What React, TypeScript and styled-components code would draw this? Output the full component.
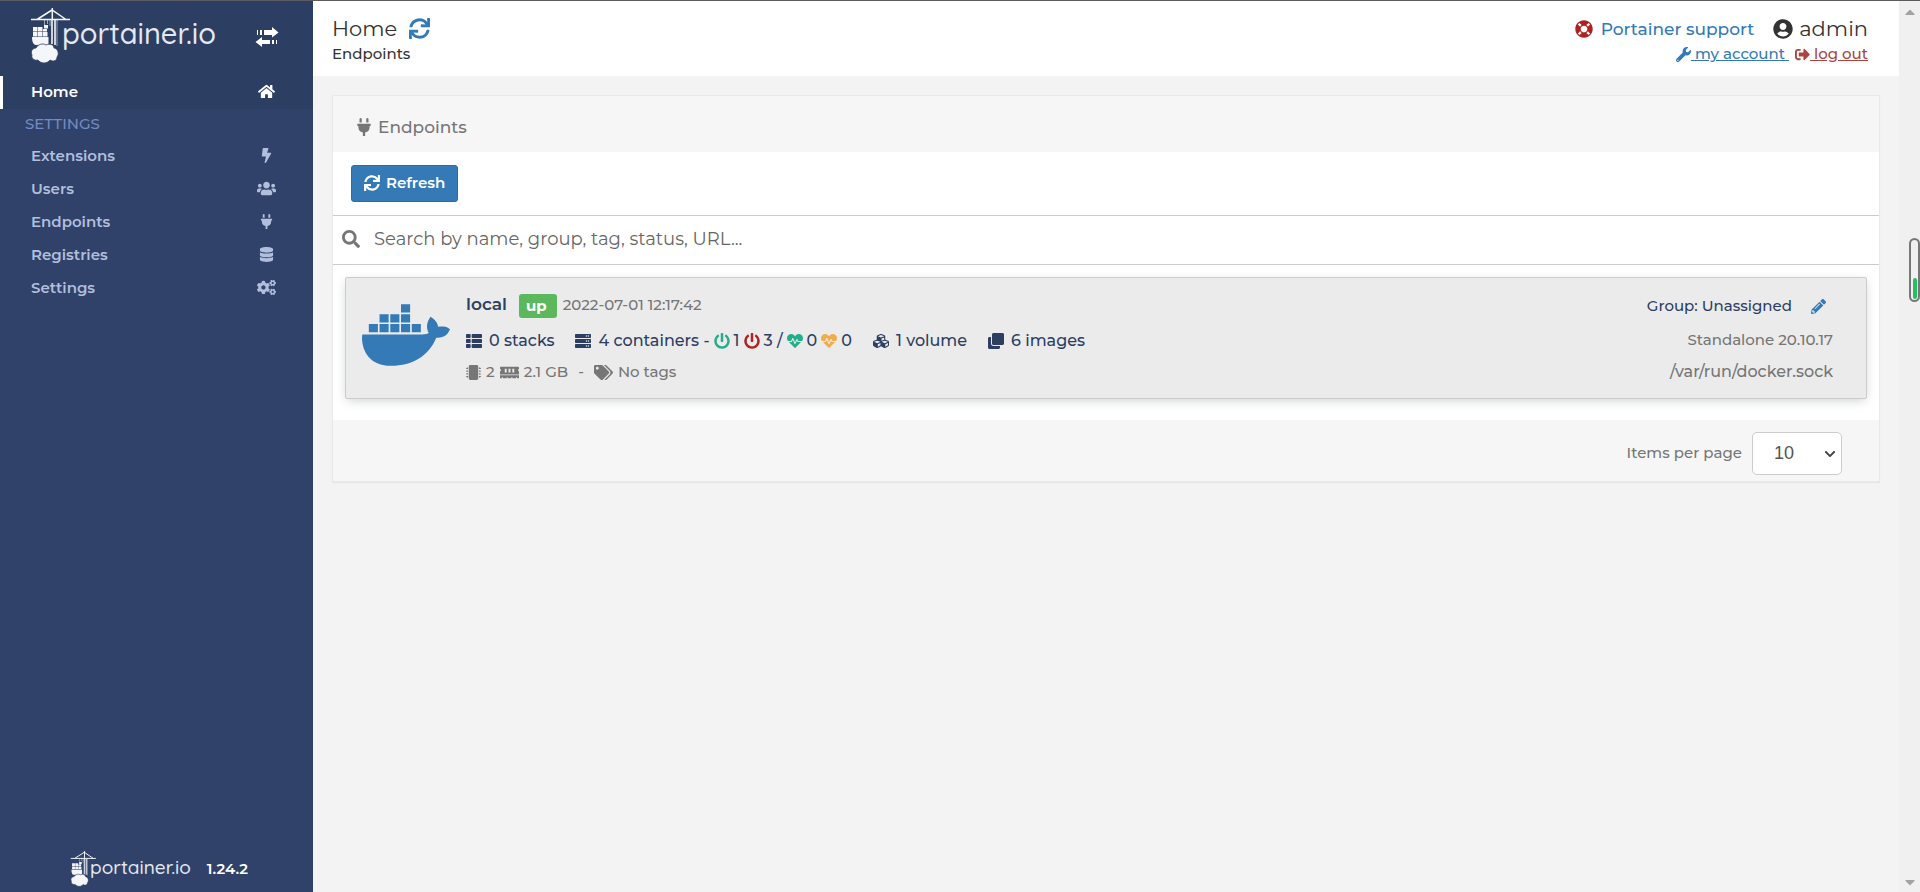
import React from 'react';
import styled, { createGlobalStyle } from 'styled-components';
import {
  FaHome, FaBolt, FaUsers, FaPlug, FaDatabase, FaCogs, FaSync, FaLifeRing, FaUserCircle, FaWrench,
  FaSignOutAlt, FaSearch, FaThList, FaServer, FaPowerOff, FaHeartbeat, FaCubes, FaClone, FaMicrochip,
  FaMemory, FaTags, FaPencilAlt, FaDocker, FaChevronDown, FaCaretUp, FaCaretDown,
} from 'react-icons/fa';

const GlobalStyle = createGlobalStyle`
  *, *::before, *::after { box-sizing: border-box; }
  body {
    margin: 0;
    background: #f3f3f3;
    color: #333;
    font: 500 15px/20px Montserrat, Inter, "Open Sans", sans-serif;
  }
  button, input, select { font: inherit; }
  a { color: #337ab7; }
  svg { flex: none; }
`;

const Page = styled.div`
  display: flex;
  min-height: 100vh;
  border-top: 1px solid #5c5c60;
`;

const Sidebar = styled.nav`
  display: flex;
  flex-direction: column;
  flex: none;
  width: 313px;
  background: #30426a;
`;

const SidebarHead = styled.div`
  display: flex;
  align-items: flex-start;
  justify-content: space-between;
  height: 75px;
  padding: 7px 34px 0 30px;
  background: #2d3e63;
`;

const ToggleButton = styled.button`
  display: flex;
  margin-top: 18px;
  padding: 0;
  border: 0;
  background: none;
  color: #fff;
`;

const MenuLink = styled.a<{ $active?: boolean }>`
  display: flex;
  align-items: center;
  justify-content: space-between;
  height: 33px;
  padding: ${(p) => (p.$active ? '0 36px 2px 28px' : '0 36px 0 31px')};
  border-left: ${(p) => (p.$active ? '3px solid #fff' : '0')};
  background: ${(p) => (p.$active ? '#2d3e63' : 'transparent')};
  color: ${(p) => (p.$active ? '#fff' : '#b2bfdc')};
  font-size: 15px;
  font-weight: 600;
  text-decoration: none;
`;

const MenuIcon = styled.span`
  display: flex;
  justify-content: center;
  width: 22px;
`;

const MenuTitle = styled.div`
  height: 30px;
  padding-left: 25px;
  color: #738bc0;
  font-size: 15px;
  line-height: 30px;
`;

const SidebarFoot = styled.div`
  display: flex;
  align-items: center;
  gap: 16px;
  margin-top: auto;
  padding: 0 0 5px 70px;
  color: #fff;
  font-size: 15px;
  font-weight: 600;
`;

const LogoRow = styled.span`
  display: flex;
  color: #f4f6fa;
`;

const Wordmark = styled.span<{ $small?: boolean }>`
  margin: ${(p) => (p.$small ? '4px 0 0 -6px' : '7px 0 0 -8px')};
  color: #e4e8f0;
  font-family: Quicksand, Lato, sans-serif;
  font-size: ${(p) => (p.$small ? 19 : 29)}px;
  font-weight: 500;
  line-height: ${(p) => (p.$small ? 24 : 36)}px;
`;

const Content = styled.div`
  flex: 1;
  min-width: 0;
`;

const Header = styled.header`
  display: flex;
  justify-content: space-between;
  height: 75px;
  padding: 13px 31px 0 19px;
  background: #fff;
`;

const PageTitle = styled.h1`
  display: flex;
  align-items: center;
  gap: 12px;
  margin: 0;
  font-size: 21px;
  font-weight: 400;
  line-height: 29px;
`;

const IconButton = styled.button`
  display: flex;
  padding: 0;
  border: 0;
  background: none;
  color: #337ab7;
`;

const Breadcrumb = styled.div`
  font-size: 15px;
  line-height: 22px;
`;

const Account = styled.div`
  display: flex;
  flex-direction: column;
  align-items: flex-end;
`;

const AccountRow = styled.div`
  display: flex;
  align-items: center;
  gap: 6px;
  height: 29px;
  font-size: 21px;
  font-weight: 400;
`;

const Support = styled.a`
  display: flex;
  align-items: center;
  gap: 8px;
  margin-right: 13px;
  font-size: 17px;
  font-weight: 500;
  text-decoration: none;
`;

const AccountLinks = styled.div`
  display: flex;
  gap: 6px;
  height: 22px;
`;

const SmallLink = styled.a<{ $danger?: boolean }>`
  display: flex;
  align-items: center;
  color: ${(p) => (p.$danger ? '#a94442' : '#337ab7')};
  font-size: 15px;
  white-space: pre;
`;

const Widget = styled.section`
  margin: 19px 19px 0;
  border: 1px solid #e9e9e9;
  background: #fff;
  box-shadow: 0 1px 1px rgba(0, 0, 0, 0.05);
`;

const WidgetHead = styled.h2`
  display: flex;
  align-items: center;
  gap: 5px;
  height: 56px;
  margin: 0;
  padding: 5px 22px 0;
  background: #f6f6f6;
  color: #767676;
  font-size: 17px;
  font-weight: 500;
`;

const ActionBar = styled.div`
  height: 64px;
  padding: 13px 18px;
  border-bottom: 1px solid #ccc;
`;

const PrimaryButton = styled.button`
  display: flex;
  align-items: center;
  gap: 6px;
  height: 37px;
  padding: 0 12px 2px;
  border: 1px solid #2e6da4;
  border-radius: 3px;
  background: #337ab7;
  color: #fff;
  font-size: 15px;
  font-weight: 600;
`;

const SearchBar = styled.label`
  display: flex;
  align-items: center;
  gap: 14px;
  height: 49px;
  padding: 0 9px 2px;
  border-bottom: 1px solid #ccc;
  color: #767676;
`;

const SearchInput = styled.input`
  flex: 1;
  padding: 0;
  border: 0;
  outline: 0;
  background: none;
  font-size: 18px;
  font-weight: 400;
  &::placeholder { color: #666; opacity: 1; }
`;

const EndpointCard = styled.article`
  display: flex;
  align-items: flex-start;
  gap: 16px;
  height: 122px;
  margin: 12px 12px 21px;
  padding: 10px 33px 0 16px;
  border: 1px solid #ccc;
  border-radius: 2px;
  background: #ebebeb;
  box-shadow: 0 3px 10px -2px rgba(120, 130, 130, 0.4);
`;

const DockerMark = styled.span`
  display: flex;
  width: 88px;
  padding-top: 3px;
  color: #337ab7;
`;

const EndpointMain = styled.div`
  flex: 1;
`;

const Row = styled.div<{ $height: number; $muted?: boolean; $gap?: number }>`
  display: flex;
  align-items: center;
  gap: ${(p) => p.$gap ?? 4}px;
  height: ${(p) => p.$height}px;
  color: ${(p) => (p.$muted ? '#767676' : '#2d3e63')};
  font-size: ${(p) => (p.$muted ? 15 : 16)}px;
  white-space: nowrap;
`;

const Name = styled.strong`
  padding-bottom: 2px;
  font-size: 17px;
  font-weight: 600;
`;

const Badge = styled.span`
  height: 24px;
  margin: 2px 2px 0 8px;
  padding: 0 10px 0 7px;
  border-radius: 3px;
  background: #5cb85c;
  color: #fff;
  font-size: 15px;
  font-weight: 700;
  line-height: 23px;
`;

const Time = styled.time`
  color: #767676;
  font-size: 15px;
  font-weight: 500;
`;

const Stat = styled.span`
  display: flex;
  align-items: center;
  gap: 7px;
`;

const Count = styled.span<{ $color?: string }>`
  display: flex;
  align-items: center;
  gap: ${(p) => (p.$color ? 4 : 5)}px;
  svg { color: ${(p) => p.$color ?? 'inherit'}; }
`;

const Breakdown = styled.span`
  display: flex;
  align-items: center;
  gap: 4px;
`;

const EndpointSide = styled.div`
  display: flex;
  flex-direction: column;
  align-items: flex-end;
`;

const GroupRow = styled.div`
  display: flex;
  align-items: center;
  gap: 19px;
  height: 36px;
  padding-right: 7px;
  color: #2d3e63;
  font-size: 15px;
`;

const Address = styled.span`
  font-size: 16px;
`;

const WidgetFoot = styled.footer`
  display: flex;
  align-items: center;
  justify-content: flex-end;
  gap: 10px;
  height: 61px;
  padding: 5px 37px 0 0;
  background: #f6f6f6;
  color: #767676;
  font-size: 15px;
`;

const SelectBox = styled.span`
  position: relative;
  display: flex;
  svg { position: absolute; top: 16px; right: 6px; color: #444; pointer-events: none; }
`;

const Select = styled.select`
  width: 90px;
  height: 43px;
  padding: 0 21px;
  border: 1px solid #ccc;
  border-radius: 5px;
  appearance: none;
  background: #fff;
  color: #555;
  font-family: "Liberation Sans", sans-serif;
  font-size: 18px;
  font-weight: 400;
`;

const ScrollTrack = styled.div`
  display: flex;
  flex-direction: column;
  justify-content: space-between;
  align-items: center;
  flex: none;
  width: 21px;
  padding: 3px 0 2px;
  background: #f0f0f0;
  color: #a3a3a3;
`;

const LevelMeter = styled.div`
  position: fixed;
  top: 238px;
  right: 0;
  display: flex;
  align-items: flex-end;
  justify-content: center;
  width: 11px;
  height: 64px;
  padding: 1px;
  border: 2px solid #777;
  border-radius: 6px;
  background: #f0f0f0;
`;

const Level = styled.div`
  width: 4px;
  height: 21px;
  border-radius: 2px;
  background: #22c35e;
`;

function Crane({ width, height }: { width: number; height: number }) {
  return (
    <svg width={width} height={height} viewBox="0 0 40 56" fill="currentColor" aria-hidden="true">
      <path d="M1 11.500h39M7 11.500 22 2l14 9.500M22.300 0v12" fill="none" stroke="currentColor" strokeWidth="1.500" />
      <path d="M22 12v24M25 12v25" fill="none" stroke="currentColor" strokeWidth="1.600" />
      <path d="M27 12v26M20 12v6" fill="none" stroke="currentColor" opacity=".55" />
      <path d="M14.500 12v5M17.500 12v4" stroke="currentColor" strokeWidth=".8" opacity=".7" />
      <path d="M3 19h4.500v4.500H3zM8 19h4.500v4.500H8zM13 21h4v2.500h-4zM3 24h4.500v4.500H3zM8 24h4.500v4.500H8zM13 24h4.500v4.500H13zM14 17h4v3.500h-4z" />
      <path d="M2 29h16.500v8H6c-3 0-4-4-4-8Z" />
      <path d="M8 52c-4 1-7-2-6-5-2-4 1-7 4-7 2-4 7-5 10-3 4-2 8 0 8 3 5 1 5 7 3 9 0 4-4 5-7 3-3 4-9 4-12 0Z" stroke="#2d3e63" strokeWidth=".8" />
    </svg>
  );
}

function Logo({ small }: { small?: boolean }) {
  return (
    <LogoRow>
      <Crane width={small ? 26 : 40} height={small ? 36 : 56} />
      <Wordmark $small={small}>portainer.io</Wordmark>
    </LogoRow>
  );
}

function TransferIcon() {
  return (
    <svg width="24" height="22" viewBox="0 0 24 22" fill="currentColor" aria-hidden="true">
      <path d="M2 4h1v5H2zM5 4h2v5H5zM9 4h8V1l6.500 5.500-6.500 5V9H9zM22 14h-1v4h1zM19 14h-2v4h2zM15 14H7v-3l-6.500 5 6.500 5v-3h8z" />
    </svg>
  );
}

const menu = [
  { label: 'Extensions', icon: FaBolt, size: 15 },
  { label: 'Users', icon: FaUsers, size: 19 },
  { label: 'Endpoints', icon: FaPlug, size: 15 },
  { label: 'Registries', icon: FaDatabase, size: 15 },
  { label: 'Settings', icon: FaCogs, size: 19 },
];

export default function App() {
  return (
    <>
      <GlobalStyle />
      <Page>
        <Sidebar>
          <SidebarHead>
            <Logo />
            <ToggleButton aria-label="Toggle sidebar"><TransferIcon /></ToggleButton>
          </SidebarHead>
          <MenuLink href="#home" $active>Home<MenuIcon><FaHome size={17} /></MenuIcon></MenuLink>
          <MenuTitle>SETTINGS</MenuTitle>
          {menu.map(({ label, icon: Icon, size }) => (
            <MenuLink key={label} href={'#' + label.toLowerCase()}>
              {label}<MenuIcon><Icon size={size} /></MenuIcon>
            </MenuLink>
          ))}
          <SidebarFoot><Logo small /><span>1.24.2</span></SidebarFoot>
        </Sidebar>
        <Content>
          <Header>
            <div>
              <PageTitle>Home<IconButton aria-label="Reload"><FaSync size={21} /></IconButton></PageTitle>
              <Breadcrumb>Endpoints</Breadcrumb>
            </div>
            <Account>
              <AccountRow>
                <Support href="#support"><FaLifeRing size={18} color="#b02020" />Portainer support</Support>
                <FaUserCircle size={20} />admin
              </AccountRow>
              <AccountLinks>
                <SmallLink href="#account"><FaWrench size={15} /> my account </SmallLink>
                <SmallLink href="#logout" $danger><FaSignOutAlt size={15} /> log out</SmallLink>
              </AccountLinks>
            </Account>
          </Header>
          <Widget>
            <WidgetHead><FaPlug size={18} />Endpoints</WidgetHead>
            <ActionBar><PrimaryButton><FaSync size={16} />Refresh</PrimaryButton></ActionBar>
            <SearchBar>
              <FaSearch size={18} />
              <SearchInput aria-label="Search endpoints" placeholder="Search by name, group, tag, status, URL..." />
            </SearchBar>
            <EndpointCard>
              <DockerMark><FaDocker size={88} /></DockerMark>
              <EndpointMain>
                <Row $height={34}>
                  <Name>local</Name><Badge>up</Badge><Time>2022-07-01 12:17:42</Time>
                </Row>
                <Row $height={38} $gap={21}>
                  <Stat><FaThList size={16} />0 stacks</Stat>
                  <Stat>
                    <FaServer size={16} />
                    <Breakdown>
                      4 containers -
                      <Count $color="#23ae89"><FaPowerOff size={16} />1</Count>
                      <Count $color="#ae2323"><FaPowerOff size={16} />3 /</Count>
                      <Count $color="#23ae89"><FaHeartbeat size={16} />0</Count>
                      <Count $color="#f0ad4e"><FaHeartbeat size={16} />0</Count>
                    </Breakdown>
                  </Stat>
                  <Stat><FaCubes size={16} />1 volume</Stat>
                  <Stat><FaClone size={16} />6 images</Stat>
                </Row>
                <Row $height={24} $muted $gap={10}>
                  <Count><FaMicrochip size={15} />2 <FaMemory size={19} />2.1 GB</Count>
                  <span>-</span>
                  <Count><FaTags size={19} />No tags</Count>
                </Row>
              </EndpointMain>
              <EndpointSide>
                <GroupRow>Group: Unassigned<IconButton aria-label="Edit endpoint"><FaPencilAlt size={15} /></IconButton></GroupRow>
                <Row $height={32} $muted>Standalone 20.10.17</Row>
                <Row $height={32} $muted><Address>/var/run/docker.sock</Address></Row>
              </EndpointSide>
            </EndpointCard>
            <WidgetFoot>
              <label htmlFor="page-size">Items per page</label>
              <SelectBox>
                <Select id="page-size" defaultValue="10"><option>10</option><option>25</option><option>50</option></Select>
                <FaChevronDown size={12} />
              </SelectBox>
            </WidgetFoot>
          </Widget>
        </Content>
        <ScrollTrack><FaCaretUp size={16} /><FaCaretDown size={16} /></ScrollTrack>
      </Page>
      <LevelMeter><Level /></LevelMeter>
    </>
  );
}
